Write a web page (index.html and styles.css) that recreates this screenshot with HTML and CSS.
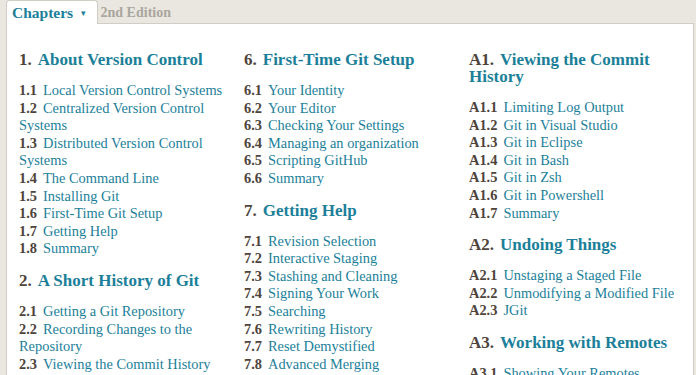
FILE: index.html
```html
<!DOCTYPE html>
<html lang="en">
<head>
  <meta charset="UTF-8">
  <title>Pro Git - Chapters</title>
  <link rel="stylesheet" href="styles.css">
</head>
<body>
  <div class="topbar">
    <div class="tab">Chapters <span class="caret">&#9662;</span></div>
    <span class="edition">2nd Edition</span>
  </div>
  <div class="panel">
    <div class="column">
      <div class="chapter">
        <h2><span class="num">1.</span>About Version Control</h2>
        <ol>
          <li><b>1.1</b><a href="#">Local Version Control Systems</a></li>
          <li><b>1.2</b><a href="#">Centralized Version Control Systems</a></li>
          <li><b>1.3</b><a href="#">Distributed Version Control Systems</a></li>
          <li><b>1.4</b><a href="#">The Command Line</a></li>
          <li><b>1.5</b><a href="#">Installing Git</a></li>
          <li><b>1.6</b><a href="#">First-Time Git Setup</a></li>
          <li><b>1.7</b><a href="#">Getting Help</a></li>
          <li><b>1.8</b><a href="#">Summary</a></li>
        </ol>
      </div>
      <div class="chapter">
        <h2><span class="num">2.</span>A Short History of Git</h2>
        <ol>
          <li><b>2.1</b><a href="#">Getting a Git Repository</a></li>
          <li><b>2.2</b><a href="#">Recording Changes to the Repository</a></li>
          <li><b>2.3</b><a href="#">Viewing the Commit History</a></li>
          <li><b>2.4</b><a href="#">Undoing Things</a></li>
          <li><b>2.5</b><a href="#">Working with Remotes</a></li>
        </ol>
      </div>
    </div>
    <div class="column">
      <div class="chapter">
        <h2><span class="num">6.</span>First-Time Git Setup</h2>
        <ol>
          <li><b>6.1</b><a href="#">Your Identity</a></li>
          <li><b>6.2</b><a href="#">Your Editor</a></li>
          <li><b>6.3</b><a href="#">Checking Your Settings</a></li>
          <li><b>6.4</b><a href="#">Managing an organization</a></li>
          <li><b>6.5</b><a href="#">Scripting GitHub</a></li>
          <li><b>6.6</b><a href="#">Summary</a></li>
        </ol>
      </div>
      <div class="chapter">
        <h2><span class="num">7.</span>Getting Help</h2>
        <ol>
          <li><b>7.1</b><a href="#">Revision Selection</a></li>
          <li><b>7.2</b><a href="#">Interactive Staging</a></li>
          <li><b>7.3</b><a href="#">Stashing and Cleaning</a></li>
          <li><b>7.4</b><a href="#">Signing Your Work</a></li>
          <li><b>7.5</b><a href="#">Searching</a></li>
          <li><b>7.6</b><a href="#">Rewriting History</a></li>
          <li><b>7.7</b><a href="#">Reset Demystified</a></li>
          <li><b>7.8</b><a href="#">Advanced Merging</a></li>
          <li><b>7.9</b><a href="#">Rerere</a></li>
        </ol>
      </div>
    </div>
    <div class="column">
      <div class="chapter">
        <h2><span class="num">A1.</span>Viewing the Commit History</h2>
        <ol>
          <li><b>A1.1</b><a href="#">Limiting Log Output</a></li>
          <li><b>A1.2</b><a href="#">Git in Visual Studio</a></li>
          <li><b>A1.3</b><a href="#">Git in Eclipse</a></li>
          <li><b>A1.4</b><a href="#">Git in Bash</a></li>
          <li><b>A1.5</b><a href="#">Git in Zsh</a></li>
          <li><b>A1.6</b><a href="#">Git in Powershell</a></li>
          <li><b>A1.7</b><a href="#">Summary</a></li>
        </ol>
      </div>
      <div class="chapter">
        <h2><span class="num">A2.</span>Undoing Things</h2>
        <ol>
          <li><b>A2.1</b><a href="#">Unstaging a Staged File</a></li>
          <li><b>A2.2</b><a href="#">Unmodifying a Modified File</a></li>
          <li><b>A2.3</b><a href="#">JGit</a></li>
        </ol>
      </div>
      <div class="chapter">
        <h2><span class="num">A3.</span>Working with Remotes</h2>
        <ol>
          <li><b>A3.1</b><a href="#">Showing Your Remotes</a></li>
          <li><b>A3.2</b><a href="#">Adding Remote Repositories</a></li>
        </ol>
      </div>
    </div>
  </div>
</body>
</html>
```

FILE: styles.css
```css
html, body {
  height: 100%;
  overflow: hidden;
}
body {
  margin: 0;
  background: #e9e7e0;
  font-family: 'Liberation Serif', 'DejaVu Serif', serif;
  color: #4e443c;
}
.topbar {
  display: flex;
  align-items: flex-end;
  padding: 1px 0 0 6px;
  height: 23px;
}
.tab {
  position: relative;
  z-index: 2;
  background: white;
  border: 1px solid #cfcdc6;
  border-bottom: none;
  border-radius: 4px 4px 0 0;
  height: 23px;
  line-height: 23px;
  padding: 0 11px 0 5px;
  font-size: 15.5px;
  font-weight: bold;
  color: #1c7f9a;
}
.caret {
  font-size: 9px;
  margin-left: 4px;
  vertical-align: 2px;
}
.edition {
  font-size: 14px;
  font-weight: bold;
  color: #a9a69e;
  margin-left: 3px;
  line-height: 23px;
}
.panel {
  position: relative;
  z-index: 1;
  margin: -1px 0 0 6px;
  width: 688px;
  background: white;
  border: 1px solid #cfcdc6;
  display: flex;
  padding: 27px 0 0 12px;
  box-sizing: border-box;
  height: 400px;
}
.column {
  width: 225px;
  flex: none;
}
.chapter {
  margin-bottom: 14px;
}
h2 {
  font-size: 17px;
  font-weight: bold;
  line-height: 17px;
  color: #1c7f9a;
  margin: 0 0 14px;
  padding-right: 20px;
}
h2 .num {
  color: #4e443c;
  margin-right: 6px;
}
ol {
  list-style: none;
  margin: 0;
  padding: 0 8px 0 0;
  font-size: 14.4px;
  line-height: 17.6px;
}
li b {
  color: #4e443c;
  margin-right: 6px;
}
li a {
  color: #1c7f9a;
  text-decoration: none;
}
```
